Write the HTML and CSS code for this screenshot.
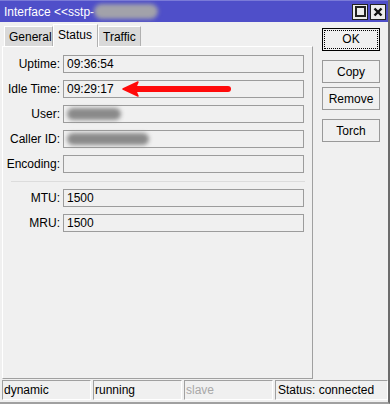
FILE: index.html
```html
<!DOCTYPE html>
<html lang="en">
<head>
<meta charset="UTF-8">
<title>Interface</title>
<link rel="stylesheet" href="styles.css">
</head>
<body>
<div class="window">
    <div class="titlebar">
        <span class="title">Interface &lt;&lt;sstp-</span>
        <span class="blur title-blur"></span>
        <div class="title-btns">
            <span class="tbtn"><span class="sq"></span></span>
            <span class="tbtn">
                <svg width="10" height="10" viewBox="0 0 10 10"><path d="M1.5 1.5 L8.5 8.5 M8.5 1.5 L1.5 8.5" stroke="#111" stroke-width="2.4"/></svg>
            </span>
        </div>
    </div>
    <div class="main">
        <div class="content">
            <div class="tabs">
                <div class="tab">General</div>
                <div class="tab active">Status</div>
                <div class="tab">Traffic</div>
            </div>
            <div class="panel">
                <div class="row"><label>Uptime:</label><div class="field">09:36:54</div></div>
                <div class="row idle">
                    <label>Idle Time:</label><div class="field">09:29:17</div>
                    <svg class="arrow" width="112" height="16" viewBox="0 0 112 16">
                        <path d="M12 8 H107" stroke="#ff0a0a" stroke-width="6" stroke-linecap="round"/>
                        <path d="M2 8 L17 1 L14 8 L17 15 Z" fill="#ff0a0a" stroke="#ff0a0a" stroke-width="1.5" stroke-linejoin="round"/>
                    </svg>
                </div>
                <div class="row"><label>User:</label><div class="field"><span class="blur user-blur"></span></div></div>
                <div class="row"><label>Caller ID:</label><div class="field"><span class="blur caller-blur"></span></div></div>
                <div class="row"><label>Encoding:</label><div class="field"></div></div>
                <div class="sep"></div>
                <div class="row"><label>MTU:</label><div class="field">1500</div></div>
                <div class="row"><label>MRU:</label><div class="field">1500</div></div>
            </div>
        </div>
        <div class="side">
            <button class="btn ok"><span>OK</span></button>
            <button class="btn">Copy</button>
            <button class="btn">Remove</button>
            <button class="btn torch">Torch</button>
        </div>
    </div>
    <div class="statusbar">
        <div class="cell c1">dynamic</div>
        <div class="cell c2">running</div>
        <div class="cell c3 dim">slave</div>
        <div class="cell c4">Status: connected</div>
    </div>
</div>
</body>
</html>
```
FILE: styles.css
```css
/* Basic styling */
body {
    margin: 0;
    padding: 0;
    font-family: "Liberation Sans", Arial, sans-serif;
    font-size: 11px;
    color: #000;
    background-color: #f0f0f0;
}
.window {
    width: 390px;
    height: 404px;
    box-sizing: border-box;
    border-right: 2px solid #6b6b6b;
    border-bottom: 2px solid #a0a0a0;
    background-color: #f0f0f0;
    display: flex;
    flex-direction: column;
}
.titlebar {
    height: 22px;
    background-color: #4f4fc9;
    border-top: 1px solid #7a7ad8;
    box-sizing: border-box;
    display: flex;
    align-items: center;
    color: #fff;
    font-size: 12px;
}
.title {
    padding-left: 4px;
}
.blur {
    display: block;
    background-color: #8a8a8a;
    border-radius: 8px;
    filter: blur(2px);
}
.title-blur {
    width: 64px;
    height: 15px;
    background-color: #a2a2aa;
}
.title-btns {
    margin-left: auto;
    margin-right: 2px;
    display: flex;
    gap: 2px;
}
.tbtn {
    width: 16px;
    height: 16px;
    box-sizing: border-box;
    background-color: #ececec;
    border: 1px solid #222;
    display: flex;
    align-items: center;
    justify-content: center;
}
.sq {
    width: 11px;
    height: 11px;
    box-sizing: border-box;
    border: 2px solid #222;
}
.main {
    display: flex;
    height: 357px;
}
.content {
    margin-left: 2px;
    width: 311px;
    display: flex;
    flex-direction: column;
}
.tabs {
    display: flex;
    height: 24px;
    align-items: flex-end;
    padding-left: 2px;
}
.tab {
    height: 20px;
    line-height: 20px;
    padding: 0 4px;
    font-size: 12px;
    background-color: #d9d9d9;
    border: 1px solid #fff;
    border-bottom: none;
    border-right: 1px solid #b0b0b0;
    box-sizing: border-box;
}
.tab:first-child {
    width: 49px;
}
.tab.active {
    height: 23px;
    line-height: 21px;
    width: 45px;
    background-color: #f0f0f0;
    margin-bottom: -1px;
    position: relative;
    z-index: 1;
}
.panel {
    flex: 1;
    border: 1px solid #fff;
    border-right-color: #a0a0a0;
    border-bottom-color: #a0a0a0;
    padding-top: 8px;
    display: flex;
    flex-direction: column;
    gap: 7px;
}
.row {
    display: flex;
    align-items: center;
    position: relative;
}
.row label {
    width: 57px;
    text-align: right;
    padding-right: 3px;
    font-size: 12px;
}
.field {
    width: 241px;
    height: 18px;
    box-sizing: border-box;
    border: 1px solid #9c9c9c;
    padding-left: 3px;
    font-size: 12px;
    display: flex;
    align-items: center;
}
.user-blur {
    width: 54px;
    height: 12px;
}
.caller-blur {
    width: 82px;
    height: 12px;
}
.arrow {
    position: absolute;
    left: 118px;
    top: 1px;
    filter: blur(0.6px);
}
.sep {
    height: 1px;
    background-color: #dcdcdc;
    margin: 1px 8px 0 8px;
    width: 294px;
}
.side {
    margin-left: 9px;
    padding-top: 6px;
    display: flex;
    flex-direction: column;
    gap: 4px;
}
.btn {
    width: 58px;
    height: 23px;
    box-sizing: border-box;
    background-color: #f0f0f0;
    border: 1px solid #999;
    font-family: "Liberation Sans", Arial, sans-serif;
    font-size: 12px;
    padding: 0;
    color: #000;
}
.btn.ok {
    border: 1px solid #000;
    padding: 1px;
    margin-bottom: 5px;
}
.btn.ok span {
    display: block;
    height: 100%;
    box-sizing: border-box;
    border: 1px dotted #000;
    line-height: 17px;
}
.btn.torch {
    margin-top: 5px;
}
.statusbar {
    display: flex;
    height: 21px;
    margin-top: 1px;
    padding-left: 2px;
    gap: 2px;
}
.cell {
    height: 20px;
    box-sizing: border-box;
    border: 1px solid #a0a0a0;
    border-right-color: #fff;
    border-bottom-color: #fff;
    padding-left: 1px;
    line-height: 18px;
    font-size: 12px;
}
.c1, .c2, .c3 {
    width: 89px;
}
.c4 {
    flex: 1;
    padding-left: 2px;
}
.dim {
    color: #a8a8a8;
}
```
